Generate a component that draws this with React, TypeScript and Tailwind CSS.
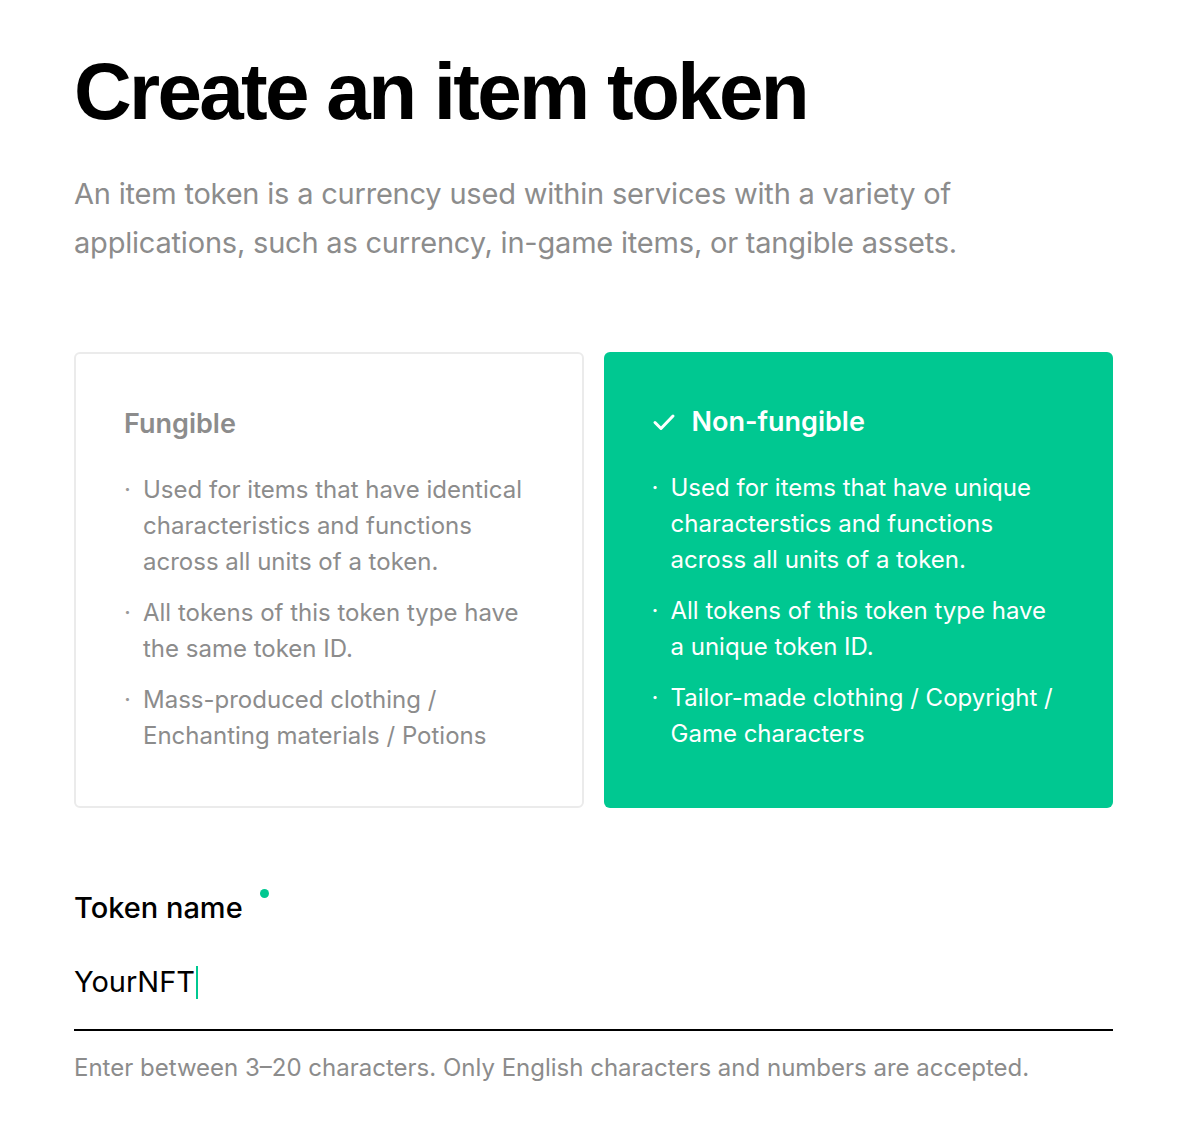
import React, { useState } from 'react';

const fungible = [
  'Used for items that have identical characteristics and functions across all units of a token.',
  'All tokens of this token type have the same token ID.',
  'Mass-produced clothing / Enchanting materials / Potions',
];

const nonFungible = [
  'Used for items that have unique characterstics and functions across all units of a token.',
  'All tokens of this token type have a unique token ID.',
  'Tailor-made clothing / Copyright / Game characters',
];

function BulletList({ items, selected }: { items: string[]; selected: boolean }) {
  return (
    <ul className="mt-[26px] flex flex-col gap-[15px]">
      {items.map((t) => (
        <li key={t} className="flex text-[24px] leading-[36px]">
          <span className={`w-[19px] shrink-0 ${selected ? 'text-white' : 'text-[#9a9a9a]'}`}>·</span>
          <span className="max-w-[388px]">{t}</span>
        </li>
      ))}
    </ul>
  );
}

function Check() {
  return (
    <svg width="24" height="24" viewBox="0 0 24 24" fill="none" stroke="white" strokeWidth="3" strokeLinecap="round" strokeLinejoin="round">
      <path d="M3 12.5l6 6L21 6" />
    </svg>
  );
}

export default function App() {
  const [type, setType] = useState<'ft' | 'nft'>('nft');
  const name = 'YourNFT';

  const card = (key: 'ft' | 'nft', title: string, items: string[]) => (
    <button
      onClick={() => setType(key)}
      className={`h-[456px] rounded-[6px] px-[48px] pt-[48px] text-left flex flex-col ${
        type === key ? 'bg-[#00c891] text-white' : 'border-2 border-[#ebebeb] text-[#8c8c8c]'
      }`}
    >
      <div className="flex items-center gap-[16px] h-[44px]">
        {type === key && <Check />}
        <span className="text-[27px] font-semibold">{title}</span>
      </div>
      <BulletList items={items} selected={type === key} />
    </button>
  );

  return (
    <div className="min-h-screen bg-white font-['Inter',sans-serif] text-black">
      <div className="w-[1039px] ml-[74px] pt-[44px] pb-[50px]">
        <h1 className="font-['Liberation_Sans',Arial,sans-serif] font-bold text-[80px] leading-[96px] tracking-[-2.7px]">
          Create an item token
        </h1>
        <p className="mt-[29px] text-[29px] leading-[49px] text-[#8c8c8c] tracking-[-0.2px] max-w-[930px]">
          An item token is a currency used within services with a variety of applications, such as currency, in-game
          items, or tangible assets.
        </p>

        <div className="mt-[85px] grid grid-cols-2 gap-[20px]">
          {card('ft', 'Fungible', fungible)}
          {card('nft', 'Non-fungible', nonFungible)}
        </div>

        <div className="mt-[80px]">
          <label className="relative inline-block text-[29px] font-medium leading-[40px]">
            Token name
            <span className="absolute -right-[26px] top-[1px] w-[9px] h-[9px] rounded-full bg-[#00c891]" />
          </label>
          <div className="mt-[34px] flex items-center text-[29px] leading-[40px] pb-[27px] border-b-2 border-black">
            <span>{name}</span>
            <span className="ml-[1px] w-[2px] h-[33px] bg-[#00c891]" />
          </div>
          <p className="mt-[21px] text-[24px] leading-[32px] text-[#8c8c8c]">
            Enter between 3–20 characters. Only English characters and numbers are accepted.
          </p>
        </div>
      </div>
    </div>
  );
}
